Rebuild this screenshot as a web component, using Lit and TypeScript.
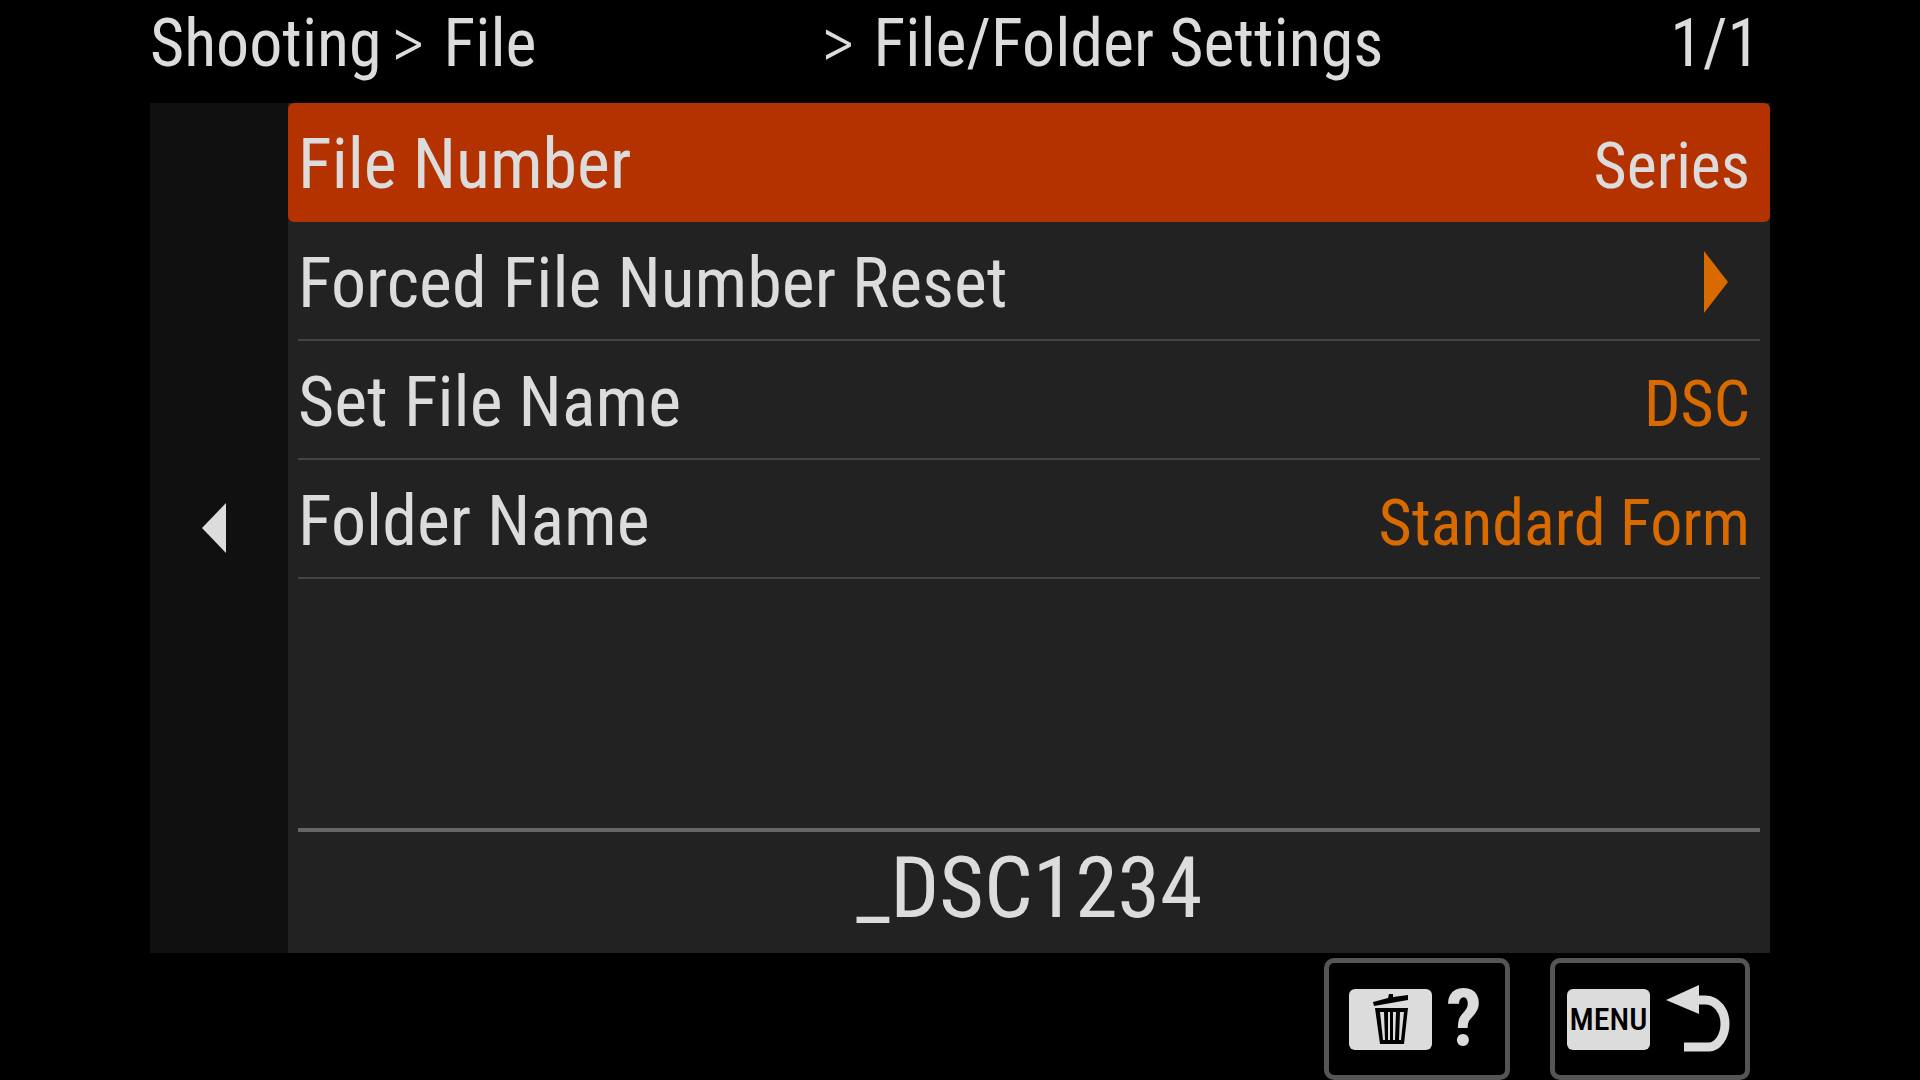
import { LitElement, html, css } from "lit";
import { customElement, property, state } from "lit/decorators.js";
import { classMap } from "lit/directives/class-map.js";

interface MenuItem {
  label: string;
  value?: string;
}

@customElement("menu-row")
export class MenuRow extends LitElement {
  @property() label = "";
  @property() value = "";
  @property({ type: Boolean, reflect: true }) selected = false;

  static styles = css`
    :host {
      display: block;
    }
    .row {
      box-sizing: border-box;
      display: flex;
      align-items: baseline;
      justify-content: space-between;
      width: 100%;
      margin: 0;
      padding: 6px 10px 0 0;
      border: 0;
      border-bottom: 2px solid #434343;
      background: none;
      color: #dcdcdc;
      font: 70px/111px "Roboto Condensed", "Roboto", sans-serif;
      text-align: left;
      white-space: nowrap;
    }
    :host([selected]) .row {
      padding-right: 20px;
      padding-left: 10px;
      border-bottom-color: #b43200;
      border-radius: 6px;
      background: #b43200;
    }
    .value {
      color: #d96a00;
      font-size: 64px;
      line-height: 64px;
    }
    :host([selected]) .value {
      color: #dcdcdc;
    }
    .arrow {
      align-self: center;
      width: 24px;
      height: 62px;
      margin: 0 22px 4px 0;
      fill: #d96a00;
    }
  `;

  render() {
    return html`
      <button class="row" type="button">
        <span>${this.label}</span>
        ${this.value
          ? html`<span class="value">${this.value}</span>`
          : html`<svg class="arrow" viewBox="0 0 24 62" aria-hidden="true"><path d="M0 0 24 31 0 62Z" /></svg>`}
      </button>
    `;
  }
}

@customElement("app-root")
export class AppRoot extends LitElement {
  @state() private selected = 0;

  private items: MenuItem[] = [
    { label: "File Number", value: "Series" },
    { label: "Forced File Number Reset" },
    { label: "Set File Name", value: "DSC" },
    { label: "Folder Name", value: "Standard Form" },
  ];

  static styles = css`
    :host {
      box-sizing: border-box;
      display: flex;
      flex-direction: column;
      min-height: 100vh;
      padding: 0 150px;
      background: #000;
      color: #dcdcdc;
      font-family: "Roboto Condensed", "Roboto", sans-serif;
      white-space: nowrap;
    }
    .header {
      display: flex;
      justify-content: space-between;
      padding: 0 10px 15px 0;
      font-size: 66px;
      line-height: 88px;
    }
    .crumbs {
      display: flex;
      margin: 0;
      padding: 0;
      list-style: none;
    }
    .crumb {
      display: flex;
      align-items: center;
    }
    .group {
      min-width: 368px;
    }
    .chevron {
      width: 32px;
      margin: 0 20px 0 10px;
      font-size: 72px;
      font-weight: 300;
      text-align: center;
    }
    .main {
      display: flex;
      flex: 1;
    }
    .rail {
      display: flex;
      align-items: center;
      justify-content: center;
      box-sizing: border-box;
      width: 138px;
      padding: 0 10px 0 0;
      border: 0;
      background: #101010;
    }
    .back {
      width: 24px;
      height: 50px;
      fill: #dcdcdc;
    }
    .panel {
      display: flex;
      flex: 1;
      flex-direction: column;
      background: #222;
    }
    .list {
      flex: 1;
      margin: 0;
      padding: 0;
      list-style: none;
    }
    .item {
      padding: 0 10px;
    }
    .item.active {
      padding: 0;
    }
    .preview {
      margin: 0 10px;
      padding: 0 0 10px;
      border-top: 4px solid #666;
      font-size: 86px;
      line-height: 111px;
      text-align: center;
    }
    .footer {
      display: flex;
      justify-content: flex-end;
      gap: 40px;
      padding: 5px 20px 0 0;
    }
    .key {
      box-sizing: border-box;
      display: flex;
      align-items: center;
      height: 122px;
      margin: 0;
      border: 5px solid #555;
      border-radius: 10px;
      background: #000;
      color: #dcdcdc;
      font-family: inherit;
    }
    .help {
      gap: 14px;
      width: 186px;
      padding: 0 20px;
    }
    .return {
      gap: 16px;
      width: 200px;
      padding: 0 12px;
    }
    .cap {
      display: flex;
      align-items: center;
      justify-content: center;
      flex: none;
      width: 83px;
      height: 61px;
      border-radius: 6px;
      background: #dcdcdc;
      color: #000;
      font-size: 32px;
      font-weight: 500;
      line-height: 60px;
    }
    .bin {
      width: 36px;
      height: 50px;
    }
    .mark {
      font-size: 80px;
      font-weight: 700;
      line-height: 80px;
    }
    .turn {
      flex: none;
      width: 64px;
      height: 70px;
    }
  `;

  render() {
    return html`
      <header class="header">
        <ol class="crumbs">
          <li class="crumb">Shooting<span class="chevron">&gt;</span></li>
          <li class="crumb group">File</li>
          <li class="crumb"><span class="chevron">&gt;</span>File/Folder Settings</li>
        </ol>
        <span>1/1</span>
      </header>
      <main class="main">
        <button class="rail" type="button" aria-label="Back">
          <svg class="back" viewBox="0 0 24 50" aria-hidden="true"><path d="M24 0V50L0 25Z" /></svg>
        </button>
        <section class="panel">
          <ul class="list">
            ${this.items.map(
              (item, i) => html`
                <li class=${classMap({ item: true, active: i === this.selected })} @click=${() => (this.selected = i)}>
                  <menu-row .label=${item.label} .value=${item.value ?? ""} ?selected=${i === this.selected}></menu-row>
                </li>
              `
            )}
          </ul>
          <p class="preview">_DSC1234</p>
        </section>
      </main>
      <footer class="footer">
        <button class="key help" type="button" aria-label="Help">
          <span class="cap">
            <svg class="bin" viewBox="0 0 36 50" aria-hidden="true">
              <path d="M0 8 15 4 16 0H20V3L35 1V6L1 12Z" />
              <path fill-rule="evenodd" d="M2 14H35L31 50H7ZM7 18 10 46H12L11 18ZM15 18V46H17V18ZM20 18V46H22L23 18ZM27 18 26 46H28L31 18Z" />
            </svg>
          </span>
          <span class="mark">?</span>
        </button>
        <button class="key return" type="button" aria-label="Return">
          <span class="cap">MENU</span>
          <svg class="turn" viewBox="0 0 64 70" aria-hidden="true">
            <path d="M0 16 33 1V30Z" fill="#dcdcdc" />
            <path d="M30 16H39C51 16 59 27 59 40C59 53 51 63 43 63H18" fill="none" stroke="#dcdcdc" stroke-width="9" />
          </svg>
        </button>
      </footer>
    `;
  }
}
